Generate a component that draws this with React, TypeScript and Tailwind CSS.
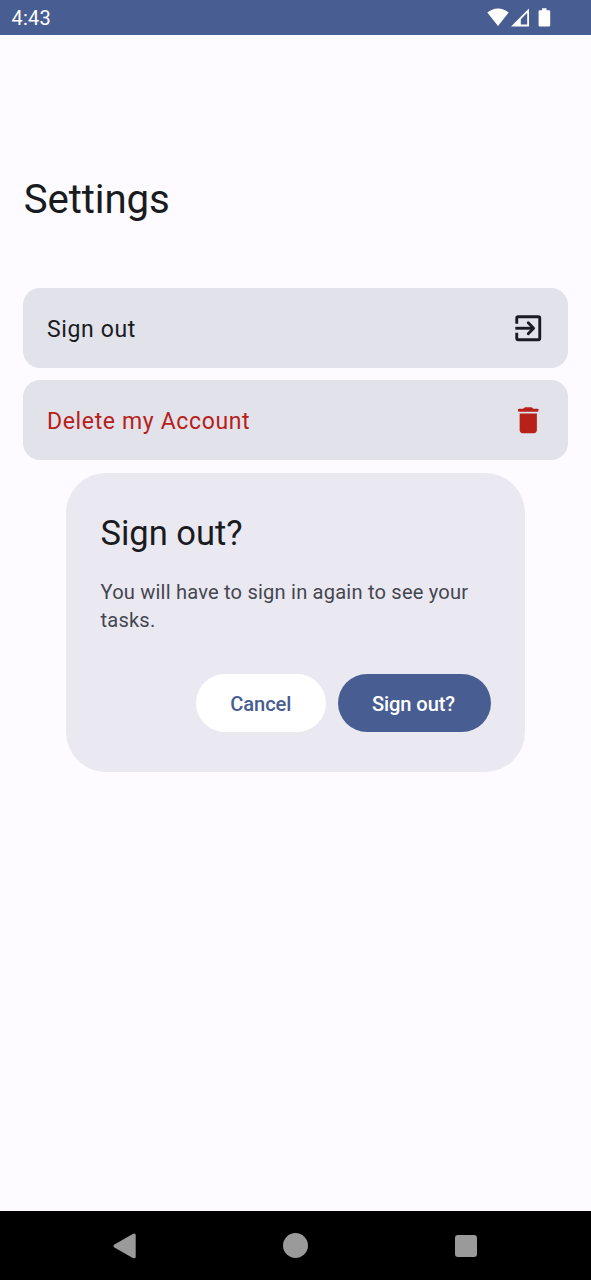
import React from "react";

function StatusBar() {
  return (
    <header className="flex h-[34.5px] shrink-0 items-center justify-between bg-[#485d92] pl-[11.5px] pr-[40px] text-white">
      <span className="pt-[2px] text-[20px] leading-[24px] tracking-[0.25px]">4:43</span>
      <div className="flex items-center">
        <svg className="h-[19px] w-[22px]" viewBox="0 0 22 19" fill="currentColor">
          <path d="M11 18 0.3 4.6C3 2 6.8 0.4 11 0.4s8 1.6 10.7 4.2z" />
        </svg>
        <svg className="ml-[2px] h-[19px] w-[18px]" viewBox="0 0 18 19" fill="currentColor">
          <path fillRule="evenodd" d="M0 18.4 18 0.4v18zM9.8 16.4H16.2V4.8L9.8 11.2z" />
        </svg>
        <svg className="ml-[9px] h-[19px] w-[13px]" viewBox="0 0 13 19" fill="currentColor">
          <path d="M4 0.2h4.5v2H11q1.2 0 1.2 1.2v13.9q0 1.2-1.2 1.2H1.8q-1.2 0-1.2-1.2V3.4q0-1.2 1.2-1.2H4z" />
        </svg>
      </div>
    </header>
  );
}

function ExitIcon() {
  return (
    <svg className="size-[34.5px]" viewBox="0 0 24 24" fill="none" stroke="currentColor" strokeWidth="2">
      <path d="M4 8.8V5q0-1 1-1h14q1 0 1 1v14q0 1-1 1H5q-1 0-1-1v-3.8" />
      <path d="M3 12h12.5" />
      <path strokeLinecap="round" strokeLinejoin="round" d="M12 8.2 15.7 12 12 15.8" />
    </svg>
  );
}

function TrashIcon() {
  return (
    <svg className="size-[34.5px]" viewBox="0 0 24 24" fill="currentColor">
      <path d="M6 19c0 1.1.9 2 2 2h8c1.1 0 2-.9 2-2V7.300H6zM18.4 4h-2.9l-.7-.7q-.3-.3-.7-.3H9.900q-.4 0-.7.3L8.500 4H5.600q-.8 0-.8 1t.8 1h12.800q.8 0 .8-1t-.8-1z" />
    </svg>
  );
}

function SettingsRow({ label, tone, children }: { label: string; tone: string; children: React.ReactNode }) {
  return (
    <button className={`flex h-[80px] w-full items-center justify-between rounded-[17px] bg-[#e1e2ea] pl-[24px] pr-[23px] ${tone}`}>
      <span className="pt-[3px] text-[23px] leading-[34px] tracking-[0.64px]">{label}</span>
      {children}
    </button>
  );
}

function SignOutDialog() {
  return (
    <div className="absolute inset-0 flex items-center justify-center pb-[0.5px]">
      <section role="dialog" className="flex h-[299px] w-[459px] flex-col rounded-[40px] bg-[#eae9f2] p-[34.5px]">
        <h2 className="mt-[2px] text-[34.5px] leading-[46px] text-[#1a1b21]">Sign out?</h2>
        <p className="mt-[22px] text-[20.125px] leading-[28.75px] tracking-[0.19px] text-[#45464f]">
          You will have to sign in again to see your tasks.
        </p>
        <div className="mt-[39px] flex justify-end gap-[11.5px] text-[20.125px] font-medium tracking-[-0.1px]">
          <button className="flex h-[57.5px] w-[130.5px] shrink-0 items-center justify-center rounded-full bg-white pt-[2px] text-[#485d92]">
            Cancel
          </button>
          <button className="flex h-[57.5px] w-[153px] shrink-0 items-center justify-center rounded-full bg-[#485d92] pr-px pt-[2px] text-white">
            Sign out?
          </button>
        </div>
      </section>
    </div>
  );
}

function NavigationBar() {
  return (
    <nav className="flex h-[69px] shrink-0 items-center justify-between bg-black pb-px pl-[112px] pr-[114px] text-[#9a9a9a]">
      <svg className="mt-px h-[26px] w-[25px]" viewBox="0 0 25 26" fill="currentColor">
        <path d="M2.4 11.6 20.8 1Q23.6-.2 23.7 2.3v21.4q-.1 2.5-2.9 1.2L2.4 14.4q-2-1.4 0-2.8z" />
      </svg>
      <span className="mr-[1.5px] size-[25px] rounded-full bg-[#9a9a9a]" />
      <span className="mt-px size-[22px] rounded-[3px] bg-[#9a9a9a]" />
    </nav>
  );
}

export default function App() {
  return (
    <div className="flex h-[1280px] w-[591px] flex-col overflow-hidden bg-[#fdfbff] font-['Roboto',sans-serif] text-[#1a1b21]">
      <StatusBar />
      <main className="relative flex-1 px-[23px]">
        <h1 className="pl-[0.8px] pt-[139px] text-[40.25px] leading-[52px] tracking-[-0.15px]">Settings</h1>
        <div className="mt-[62.5px] flex flex-col gap-[12px]">
          <SettingsRow label="Sign out" tone="text-[#1a1b21]">
            <ExitIcon />
          </SettingsRow>
          <SettingsRow label="Delete my Account" tone="text-[#b8201a]">
            <TrashIcon />
          </SettingsRow>
        </div>
        <SignOutDialog />
      </main>
      <NavigationBar />
    </div>
  );
}
